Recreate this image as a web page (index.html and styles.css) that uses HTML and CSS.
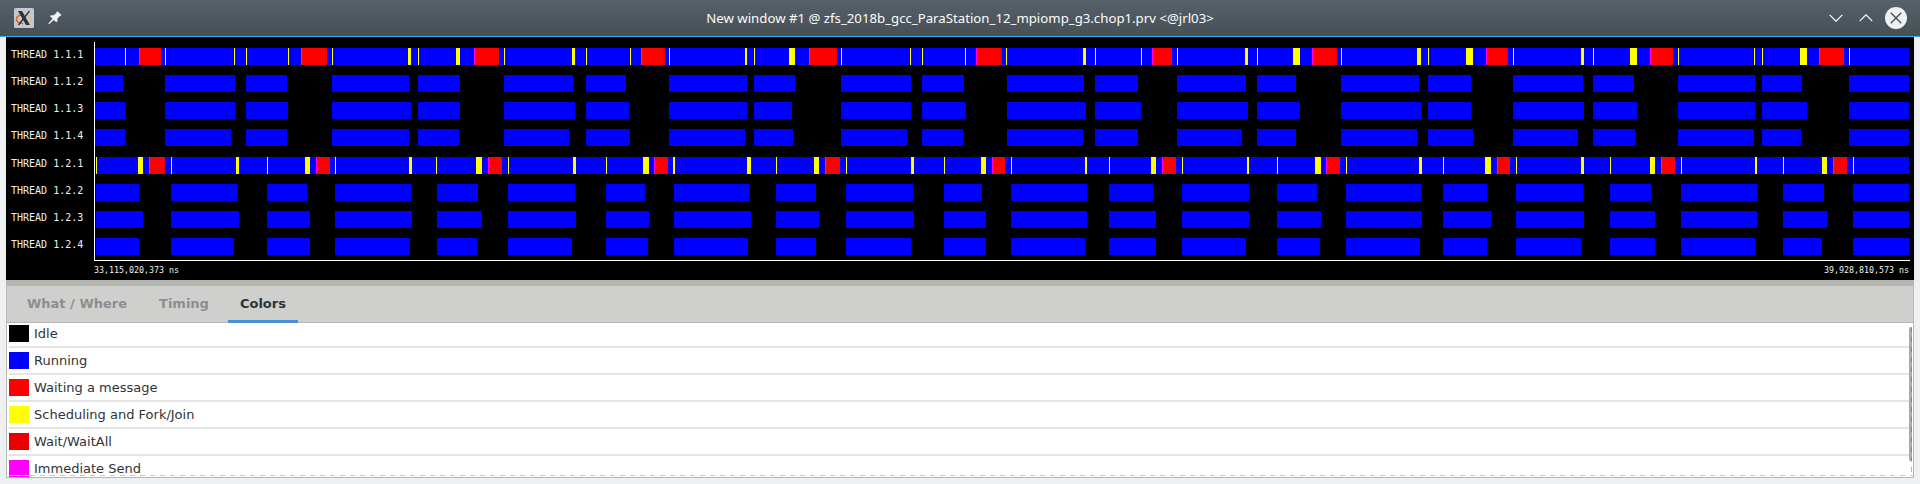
FILE: index.html
```html
<!DOCTYPE html>
<html lang="en">
<head>
<meta charset="utf-8">
<title>New window #1</title>
<link rel="stylesheet" href="styles.css">
</head>
<body>
<div class="window">
  <header class="titlebar">
    <div class="title-left">
      <svg class="app-icon" viewBox="0 0 20 20">
        <rect width="20" height="20" rx="1.5" fill="#c3c9cd"/>
        <ellipse cx="10" cy="11" rx="7.6" ry="4.6" fill="none" stroke="#e9b876" stroke-width="1.2"/>
        <path d="M9 6.5C5 7 2.4 9 2.4 11.3S5 15.400 9 15.600" fill="none" stroke="#e3602f" stroke-width="1.500"/>
        <path d="M4 3h4l8 14h-4z" fill="#2e3436"/>
        <path d="M15.500 3L4.500 17" stroke="#2e3436" stroke-width="1.300"/>
      </svg>
      <svg class="pin-icon" viewBox="0 0 14 14">
        <path d="M9.500 0.200L13.400 4 12.300 5.300 11.800 5.100 9.300 7.700 9.500 10.300 8.300 11.300 5.800 8.900 1 13.200 0.300 12.600 4.600 7.800 2 5.200 3 4.200 5.800 4.300 8.500 1.700 8.300 1.200z" fill="#f2f3f3"/>
      </svg>
    </div>
    <div class="title-text">New window #1 @ zfs_2018b_gcc_ParaStation_12_mpiomp_g3.chop1.prv &lt;@jrl03&gt;</div>
    <div class="title-buttons">
      <svg class="chevron" viewBox="0 0 14 8"><path d="M0.700 0.900L7 7.200 13.300 0.900"/></svg>
      <svg class="chevron" viewBox="0 0 14 8"><path d="M0.700 7.100L7 0.800 13.300 7.100"/></svg>
      <svg class="close" viewBox="0 0 22 22"><circle cx="11" cy="11" r="11"/><path d="M5.800 5.800L16.200 16.200M16.200 5.800L5.800 16.200"/></svg>
    </div>
  </header>

  <main class="content">
    <section class="timeline">
      <div class="labels">
        <span>THREAD 1.1.1</span><span>THREAD 1.1.2</span><span>THREAD 1.1.3</span><span>THREAD 1.1.4</span>
        <span class="process-start">THREAD 1.2.1</span><span>THREAD 1.2.2</span><span>THREAD 1.2.3</span><span>THREAD 1.2.4</span>
      </div>
      <div class="plot">
        <svg class="traces" viewBox="94 42 1816 219" shape-rendering="crispEdges">
          <path class="axis" d="M94 42h1v218h1815v1H94z"/>
          <g class="running">
            <path d="M95 56.500H1909"/>
            <path d="M95 83.500H123M165 83.500H235M246 83.500H287M332 83.500H409M418 83.500H460M504 83.500H573M586 83.500H626M669 83.500H747M754 83.500H795M841 83.500H911M922 83.500H964M1007 83.500H1084M1095 83.500H1138M1177 83.500H1246M1257 83.500H1296M1341 83.500H1419M1428 83.500H1471M1513 83.500H1583M1593 83.500H1634M1678 83.500H1755M1762 83.500H1802M1849 83.500H1909"/>
            <path d="M95 110.500H125M165 110.500H235M246 110.500H288M332 110.500H411M418 110.500H460M504 110.500H575M586 110.500H629M669 110.500H747M754 110.500H792M841 110.500H911M922 110.500H966M1007 110.500H1086M1095 110.500H1141M1177 110.500H1248M1257 110.500H1300M1341 110.500H1421M1428 110.500H1471M1513 110.500H1584M1593 110.500H1637M1678 110.500H1755M1762 110.500H1807M1849 110.500H1909"/>
            <path d="M95 137.500H125M165 137.500H231M246 137.500H287M332 137.500H409M418 137.500H459M504 137.500H569M586 137.500H630M669 137.500H745M754 137.500H793M841 137.500H907M922 137.500H963M1007 137.500H1083M1095 137.500H1138M1177 137.500H1242M1257 137.500H1296M1341 137.500H1417M1428 137.500H1473M1513 137.500H1578M1593 137.500H1635M1678 137.500H1754M1762 137.500H1801M1849 137.500H1909"/>
            <path d="M97 165.500H1909"/>
            <path d="M96 192.500H139M171 192.500H237M267 192.500H307M335 192.500H411M437 192.500H478M508 192.500H575M606 192.500H645M674 192.500H749M776 192.500H816M846 192.500H913M944 192.500H982M1011 192.500H1087M1109 192.500H1153M1182 192.500H1249M1277 192.500H1317M1346 192.500H1421M1443 192.500H1487M1516 192.500H1583M1610 192.500H1651M1681 192.500H1757M1783 192.500H1824M1853 192.500H1909"/>
            <path d="M96 219.500H143M171 219.500H239M267 219.500H310M335 219.500H412M437 219.500H482M508 219.500H576M606 219.500H649M674 219.500H751M776 219.500H819M846 219.500H914M944 219.500H986M1011 219.500H1087M1109 219.500H1156M1182 219.500H1249M1277 219.500H1321M1346 219.500H1422M1443 219.500H1491M1516 219.500H1584M1610 219.500H1655M1681 219.500H1757M1783 219.500H1827M1853 219.500H1909"/>
            <path d="M96 246.500H139M171 246.500H234M267 246.500H310M335 246.500H410M437 246.500H477M508 246.500H572M606 246.500H648M674 246.500H748M776 246.500H816M846 246.500H911M944 246.500H986M1011 246.500H1085M1109 246.500H1156M1182 246.500H1246M1277 246.500H1320M1346 246.500H1420M1443 246.500H1487M1516 246.500H1581M1610 246.500H1655M1681 246.500H1755M1783 246.500H1822M1853 246.500H1909"/>
          </g>
          <g class="waiting">
            <path d="M140 56.500h21M302 56.500h25M475 56.500h24M642 56.500h23M810 56.500h27M977 56.500h25M1153 56.500h19M1313 56.500h24M1487 56.500h21M1651 56.500h22M1820 56.500h24"/>
            <path d="M150 165.500h15M317 165.500h13M489 165.500h13M655 165.500h13M826 165.500h14M993 165.500h12M1163 165.500h13M1327 165.500h13M1498 165.500h12M1662 165.500h13M1834 165.500h13"/>
          </g>
          <g class="waitall">
            <path d="M497 56.500h2M663 56.500h2M835 56.500h2M1000 56.500h2M1336 56.500h1M1507 56.500h1M1672 56.500h1M164 165.500h1"/>
          </g>
          <g class="send">
            <path d="M139 56.500h1M301 56.500h1M474 56.500h1M641 56.500h1M809 56.500h1M976 56.500h1M1152 56.500h1M1312 56.500h1M1486 56.500h1M1650 56.500h1M1819 56.500h1"/>
            <path d="M149 165.500h1M316 165.500h1M488 165.500h1M654 165.500h1M825 165.500h1M992 165.500h1M1162 165.500h1M1326 165.500h1M1497 165.500h1M1661 165.500h1M1833 165.500h1"/>
          </g>
          <g class="scheduling">
            <path d="M125 56.500h1M165 56.500h1M234 56.500h1M246 56.500h1M288 56.500h1M332 56.500h1M408 56.500h3M418 56.500h1M456 56.500h4M504 56.500h1M572 56.500h3M586 56.500h1M630 56.500h1M669 56.500h1M745 56.500h2M754 56.500h1M789 56.500h6M841 56.500h1M910 56.500h1M922 56.500h1M965 56.500h1M1006 56.500h1M1083 56.500h3M1095 56.500h1M1141 56.500h1M1177 56.500h1M1245 56.500h3M1257 56.500h1M1293 56.500h7M1341 56.500h1M1417 56.500h4M1428 56.500h1M1466 56.500h7M1513 56.500h1M1581 56.500h3M1593 56.500h1M1630 56.500h7M1678 56.500h1M1754 56.500h1M1762 56.500h1M1800 56.500h7M1849 56.500h1"/>
            <path d="M96 165.500h1M138 165.500h5M171 165.500h1M236 165.500h3M267 165.500h1M305 165.500h5M335 165.500h1M409 165.500h3M436 165.500h1M476 165.500h6M508 165.500h1M573 165.500h3M606 165.500h1M643 165.500h6M673 165.500h2M747 165.500h4M776 165.500h1M814 165.500h5M846 165.500h1M911 165.500h3M944 165.500h1M981 165.500h5M1011 165.500h1M1085 165.500h2M1109 165.500h1M1151 165.500h5M1182 165.500h1M1247 165.500h2M1277 165.500h1M1315 165.500h6M1346 165.500h1M1419 165.500h3M1443 165.500h1M1485 165.500h6M1516 165.500h1M1581 165.500h3M1610 165.500h1M1650 165.500h5M1681 165.500h1M1755 165.500h2M1783 165.500h1M1822 165.500h5M1853 165.500h1"/>
          </g>
        </svg>
        <div class="times"><span>33,115,020,373 ns</span><span>39,928,810,573 ns</span></div>
      </div>
    </section>

    <section class="panel">
      <nav class="tabs">
        <div class="tab">What / Where</div>
        <div class="tab">Timing</div>
        <div class="tab active">Colors</div>
      </nav>
      <div class="legend">
        <div class="item"><i class="swatch idle"></i>Idle</div>
        <div class="item"><i class="swatch run"></i>Running</div>
        <div class="item"><i class="swatch wait"></i>Waiting a message</div>
        <div class="item"><i class="swatch sched"></i>Scheduling and Fork/Join</div>
        <div class="item"><i class="swatch all"></i>Wait/WaitAll</div>
        <div class="item"><i class="swatch isend"></i>Immediate Send</div>
        <div class="undershoot-bottom"></div>
        <div class="scrollbar"></div>
        <div class="undershoot-right"></div>
      </div>
    </section>
  </main>
</div>
</body>
</html>
```
FILE: styles.css
```css
* { box-sizing: border-box; }
body { margin: 0; background: #eff0f1; }
.window {
  width: 1920px;
  height: 484px;
  overflow: hidden;
  background: #eff0f1;
  font-family: "DejaVu Sans", sans-serif;
}
.titlebar {
  display: grid;
  grid-template-columns: 200px 1fr 200px;
  align-items: center;
  height: 37px;
  background: linear-gradient(#566068, #475057);
  border-bottom: 1px solid #3daee9;
}
.title-left { display: flex; align-items: center; gap: 14px; padding-left: 14px; }
.app-icon { width: 20px; height: 20px; }
.pin-icon { width: 14px; height: 14px; }
.title-text {
  text-align: center;
  color: #fcfcfc;
  font: 13.220px/20px "Noto Sans", sans-serif;
  white-space: nowrap;
}
.title-buttons { display: flex; justify-content: flex-end; align-items: center; gap: 16px; padding-right: 13px; }
.chevron { width: 14px; height: 8px; fill: none; stroke: #fcfcfc; stroke-width: 1.200; }
.chevron + .close { margin-left: -4px; }
.close { width: 22px; height: 22px; }
.close circle { fill: #f0f1f1; }
.close path { stroke: #475057; stroke-width: 1.400; }

.content { padding: 0 6px; }
.timeline { display: flex; height: 243px; padding-top: 5px; background: #000; }
.labels {
  display: flex;
  flex-direction: column;
  width: 88px;
  padding: 0 0 0 5px;
  color: #f0f0f0;
  font: 10px/25px "DejaVu Sans Mono", monospace;
  white-space: pre;
}
.labels span { height: 27px; }
.labels .process-start { margin-top: 1px; }
.plot { width: 1816px; }
.traces { display: block; width: 1816px; height: 219px; }
.axis { fill: #fff; }
.traces g { fill: none; stroke-width: 17; }
.running { stroke: #00f; }
.waiting { stroke: #f00; }
.waitall { stroke: #eb0000; }
.send { stroke: #f0f; }
.scheduling { stroke: #ff0; }
.times {
  display: flex;
  justify-content: space-between;
  padding-right: 1px;
  color: #f0f0f0;
  font: 8.300px/18px "DejaVu Sans Mono", monospace;
}

.panel {
  height: 198px;
  border: 1px solid #b6b6b3;
  border-top: 6px solid #b6b6b0;
}
.tabs {
  display: flex;
  height: 37px;
  padding-left: 7px;
  background: #cfcfcd;
  border-bottom: 1px solid #b6b6b3;
}
.tab {
  height: 37px;
  margin-right: 6px;
  padding: 0 13px;
  color: #8b8e8f;
  font-weight: bold;
  font-size: 13px;
  line-height: 36px;
  white-space: nowrap;
}
.tab.active {
  padding: 0 12px;
  color: #2e3436;
  border-bottom: 3px solid #4a90d9;
}
.legend {
  position: relative;
  height: 154px;
  overflow: hidden;
  padding: 2px 2px 0;
  background: #fff;
}
.item {
  display: flex;
  gap: 5px;
  height: 27px;
  color: #2e3436;
  font-size: 13px;
  line-height: 17px;
  background: linear-gradient(#e5e5e5, #e5e5e5) 0 21px / 100% 2px no-repeat;
}
.item:nth-child(6) { background: none; }
.swatch { width: 20px; height: 17px; }
.idle { background: #000; }
.run { background: #00f; }
.wait { background: #f00; }
.sched { background: #ff0; }
.all { background: #eb0000; }
.isend { background: #f0f; }
.undershoot-bottom {
  position: absolute;
  left: 3px;
  right: 0;
  bottom: 1px;
  height: 1px;
  background: repeating-linear-gradient(90deg, #c8c8c8 0 5px, #fff 5px 10px);
}
.scrollbar {
  position: absolute;
  top: 4px;
  right: 1px;
  width: 3px;
  height: 134px;
  border-radius: 2px;
  background: #a6abab;
}
.undershoot-right {
  position: absolute;
  top: 4px;
  right: 1px;
  bottom: 1px;
  width: 1px;
  background: repeating-linear-gradient(rgba(80, 90, 85, .45) 0 5px, transparent 5px 10px);
}
```
